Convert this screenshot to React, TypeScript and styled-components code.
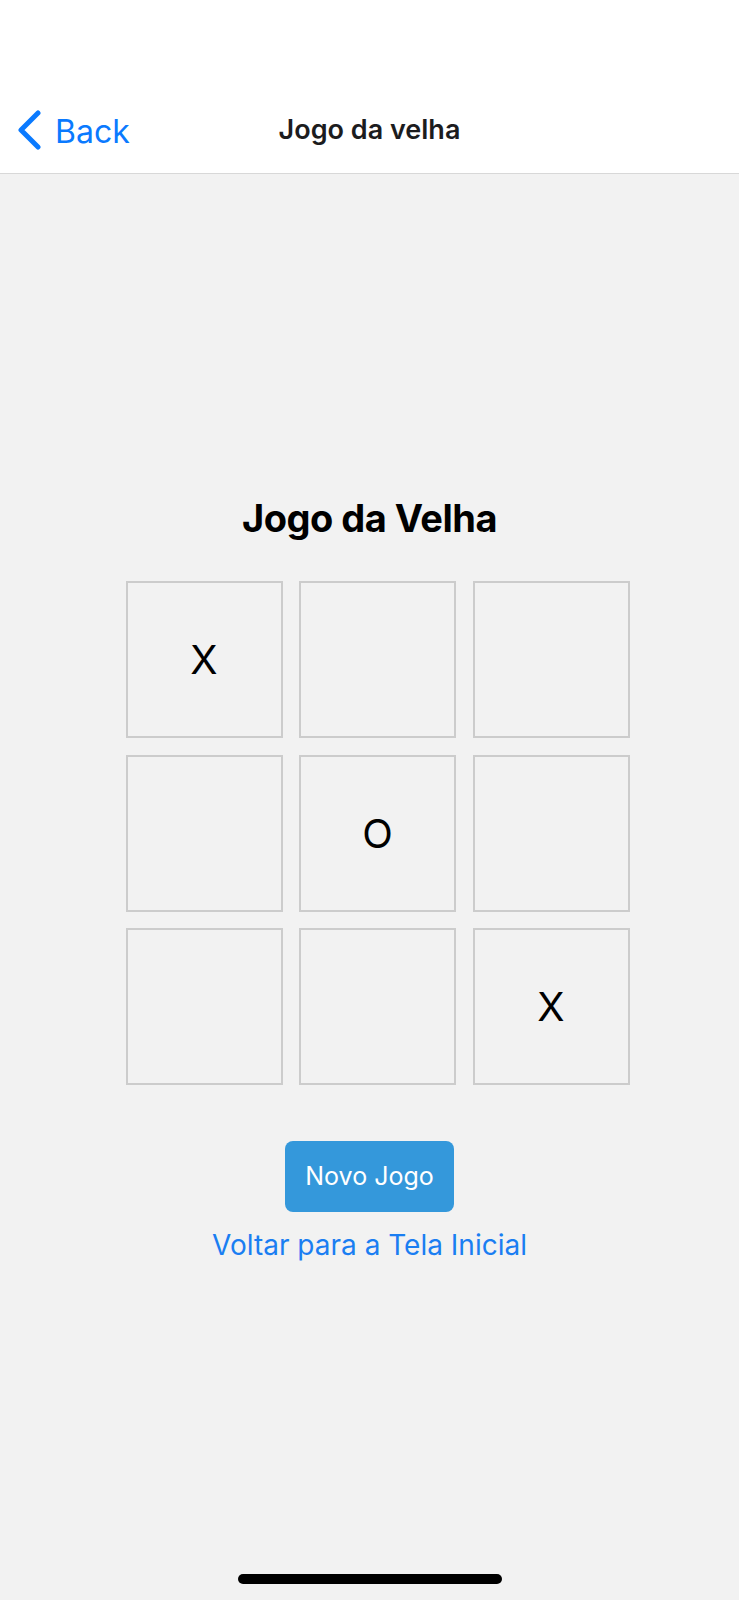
import React, {useState} from 'react';
import styled, {createGlobalStyle} from 'styled-components';

type Mark = 'X' | 'O' | null;

const initialBoard: Mark[] = ['X', null, null, null, 'O', null, null, null, 'X'];

const GlobalStyle = createGlobalStyle`
    html, body {
        margin: 0;
        padding: 0;
        background: #f2f2f2;
    }
    body {
        font-family: Inter, "Noto Sans", "Liberation Sans", sans-serif;
        -webkit-font-smoothing: antialiased;
    }
`;

const BackChevron = () => (
    <svg
        width='24'
        height='40'
        viewBox='0 0 24 40'
        fill='none'
    >
        <polyline
            points='21,3 4,20 21,37'
            stroke='#0a7aff'
            strokeWidth='5'
            strokeLinecap='round'
            strokeLinejoin='round'
        />
    </svg>
);

export default function App() {
    const [board, setBoard] = useState<Mark[]>(initialBoard);

    const handleNewGame = () => {
        setBoard(Array(9).fill(null));
    };

    return (
        <Screen>
            <GlobalStyle/>
            <Header>
                <NavBar>
                    <BackButton type='button'>
                        <BackChevron/>
                        <BackText>{'Back'}</BackText>
                    </BackButton>
                    <NavTitle>{'Jogo da velha'}</NavTitle>
                    <span/>
                </NavBar>
            </Header>
            <Content>
                <Title>{'Jogo da Velha'}</Title>
                <Board>
                    {board.map((mark, i) => (
                        <Cell key={i}>{mark}</Cell>
                    ))}
                </Board>
                <NewGameButton
                    type='button'
                    onClick={handleNewGame}
                >
                    {'Novo Jogo'}
                </NewGameButton>
                <HomeLink type='button'>{'Voltar para a Tela Inicial'}</HomeLink>
            </Content>
            <HomeIndicator/>
        </Screen>
    );
}

const Screen = styled.div`
    display: flex;
    flex-direction: column;
    min-height: 1600px;
    background: #f2f2f2;
`;

const Header = styled.header`
    background: #ffffff;
    padding-top: 90px;
    border-bottom: 1px solid #d8d8d8;
`;

const NavBar = styled.div`
    display: grid;
    grid-template-columns: 1fr auto 1fr;
    align-items: center;
    height: 83px;
`;

const BackButton = styled.button`
    display: flex;
    align-items: center;
    gap: 14px;
    justify-self: start;
    padding: 0 0 4px 17px;
    border: none;
    background: none;
    cursor: pointer;
`;

const BackText = styled.span`
    font-family: Inter, "Liberation Sans", sans-serif;
    font-size: 32px;
    line-height: 40px;
    color: #0a7aff;
    padding-top: 4px;
`;

const NavTitle = styled.div`
    font-size: 27px;
    line-height: 32px;
    font-weight: 600;
    color: #1c1c1e;
    padding-bottom: 4px;
`;

const Content = styled.main`
    flex: 1;
    display: flex;
    flex-direction: column;
    align-items: center;
    padding-top: 320px;
`;

const Title = styled.h1`
    margin: 0;
    font-size: 38px;
    line-height: 48px;
    font-weight: 700;
    letter-spacing: -0.5px;
    color: #000000;
`;

const Board = styled.div`
    display: grid;
    grid-template-columns: repeat(3, 157px);
    grid-auto-rows: 157px;
    gap: 16.5px;
    margin: 39px 0 0 16px;
`;

const Cell = styled.div`
    box-sizing: border-box;
    display: flex;
    align-items: center;
    justify-content: center;
    border: 2px solid #cccccc;
    font-size: 40px;
    color: #000000;
`;

const NewGameButton = styled.button`
    margin-top: 56px;
    padding: 19px 20px;
    border: none;
    border-radius: 8px;
    background: #3498db;
    color: #ffffff;
    font-family: Inter, "Liberation Sans", sans-serif;
    font-size: 25px;
    line-height: 33px;
    cursor: pointer;
`;

const HomeLink = styled.button`
    margin-top: 16px;
    padding: 0;
    border: none;
    background: none;
    color: #1a7ef2;
    font-family: Inter, "Liberation Sans", sans-serif;
    font-size: 28px;
    line-height: 35px;
    cursor: pointer;
`;

const HomeIndicator = styled.div`
    position: fixed;
    left: 50%;
    bottom: 16px;
    width: 264px;
    height: 10px;
    margin-left: -132px;
    border-radius: 5px;
    background: #000000;
`;
